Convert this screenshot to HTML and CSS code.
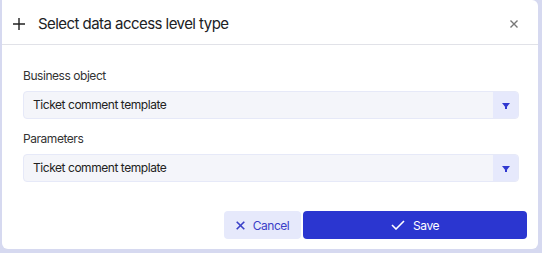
FILE: index.html
```html
<!DOCTYPE html>
<html lang="en">
<head>
    <meta charset="UTF-8">
    <title>Select data access level type</title>
    <link rel="stylesheet" href="styles.css">
</head>
<body>
    <div class="dialog">
        <div class="dialog-header">
            <svg class="icon-plus" width="12" height="12" viewBox="0 0 12 12">
                <path d="M6 0v12M0 6h12" stroke="#222" stroke-width="1.4" fill="none"/>
            </svg>
            <span class="dialog-title">Select data access level type</span>
            <svg class="icon-close" width="8" height="8" viewBox="0 0 8 8">
                <path d="M0.5 0.5l7 7M7.5 0.5l-7 7" stroke="#777" stroke-width="1.4" fill="none"/>
            </svg>
        </div>
        <div class="dialog-body">
            <label class="field-label">Business object</label>
            <div class="select">
                <span class="select-value">Ticket comment template</span>
                <span class="select-arrow"><span class="triangle"></span></span>
            </div>
            <label class="field-label">Parameters</label>
            <div class="select">
                <span class="select-value">Ticket comment template</span>
                <span class="select-arrow"><span class="triangle"></span></span>
            </div>
        </div>
        <div class="dialog-footer">
            <button class="btn btn-cancel">
                <svg width="9" height="9" viewBox="0 0 9 9">
                    <path d="M0.7 0.7l7.6 7.6M8.3 0.7l-7.6 7.6" stroke="#3a40c8" stroke-width="1.6" fill="none"/>
                </svg>
                Cancel
            </button>
            <button class="btn btn-save">
                <svg width="14" height="10" viewBox="0 0 14 10">
                    <path d="M1 5l4 4l8-8" stroke="#fff" stroke-width="1.6" fill="none"/>
                </svg>
                Save
            </button>
        </div>
    </div>
</body>
</html>
```

FILE: styles.css
```css
html, body {
    margin: 0;
    height: 100%;
}
body {
    background-color: #d6d9f0;
    font-family: Inter, "Noto Sans", sans-serif;
    color: #222;
}
.dialog {
    margin-left: 2px;
    width: 536px;
    height: 249px;
    background-color: #fff;
    border-radius: 0 6px 6px 6px;
    display: flex;
    flex-direction: column;
}
.dialog-header {
    height: 45px;
    border-bottom: 1px solid #e1e2e8;
    display: flex;
    align-items: center;
    padding: 2px 20px 0 11px;
    box-sizing: border-box;
}
.icon-plus {
    margin-right: 13px;
    margin-top: 1px;
}
.dialog-title {
    font-size: 15px;
    letter-spacing: -0.55px;
    flex: 1;
    color: #202124;
}
.icon-close {
    margin-top: 2px;
}
.dialog-body {
    padding: 23px 19px 0 21px;
}
.field-label {
    display: block;
    font-size: 12px;
    letter-spacing: -0.45px;
    color: #333;
    margin-bottom: 8px;
}
.select {
    display: flex;
    height: 28px;
    box-sizing: border-box;
    border: 1px solid #e6e9f8;
    border-radius: 4px;
    background-color: #f4f5fa;
    margin-bottom: 12px;
    overflow: hidden;
}
.select-value {
    flex: 1;
    font-size: 12px;
    letter-spacing: -0.45px;
    line-height: 26px;
    padding-left: 9px;
    color: #222;
}
.select-arrow {
    width: 25px;
    background-color: #e6e9fc;
    display: flex;
    align-items: center;
    justify-content: center;
}
.triangle {
    width: 0;
    height: 0;
    border-left: 4px solid transparent;
    border-right: 4px solid transparent;
    border-top: 5px solid #3038d0;
    position: relative;
}
.triangle::after {
    content: "";
    position: absolute;
    left: -1px;
    top: -1px;
    width: 2px;
    height: 2px;
    background-color: #3038d0;
}
.dialog-footer {
    display: flex;
    justify-content: flex-end;
    gap: 2px;
    padding: 17px 11px 0 0;
}
.btn {
    height: 28px;
    border: none;
    border-radius: 4px;
    font-family: Inter, "Noto Sans", sans-serif;
    font-size: 12px;
    letter-spacing: -0.45px;
    display: flex;
    align-items: center;
    justify-content: center;
    gap: 8px;
    cursor: pointer;
}
.btn-cancel {
    width: 77px;
    background-color: #e6e9fb;
    color: #3a40c8;
}
.btn-save {
    width: 224px;
    background-color: #2b36d0;
    color: #fff;
}
```
